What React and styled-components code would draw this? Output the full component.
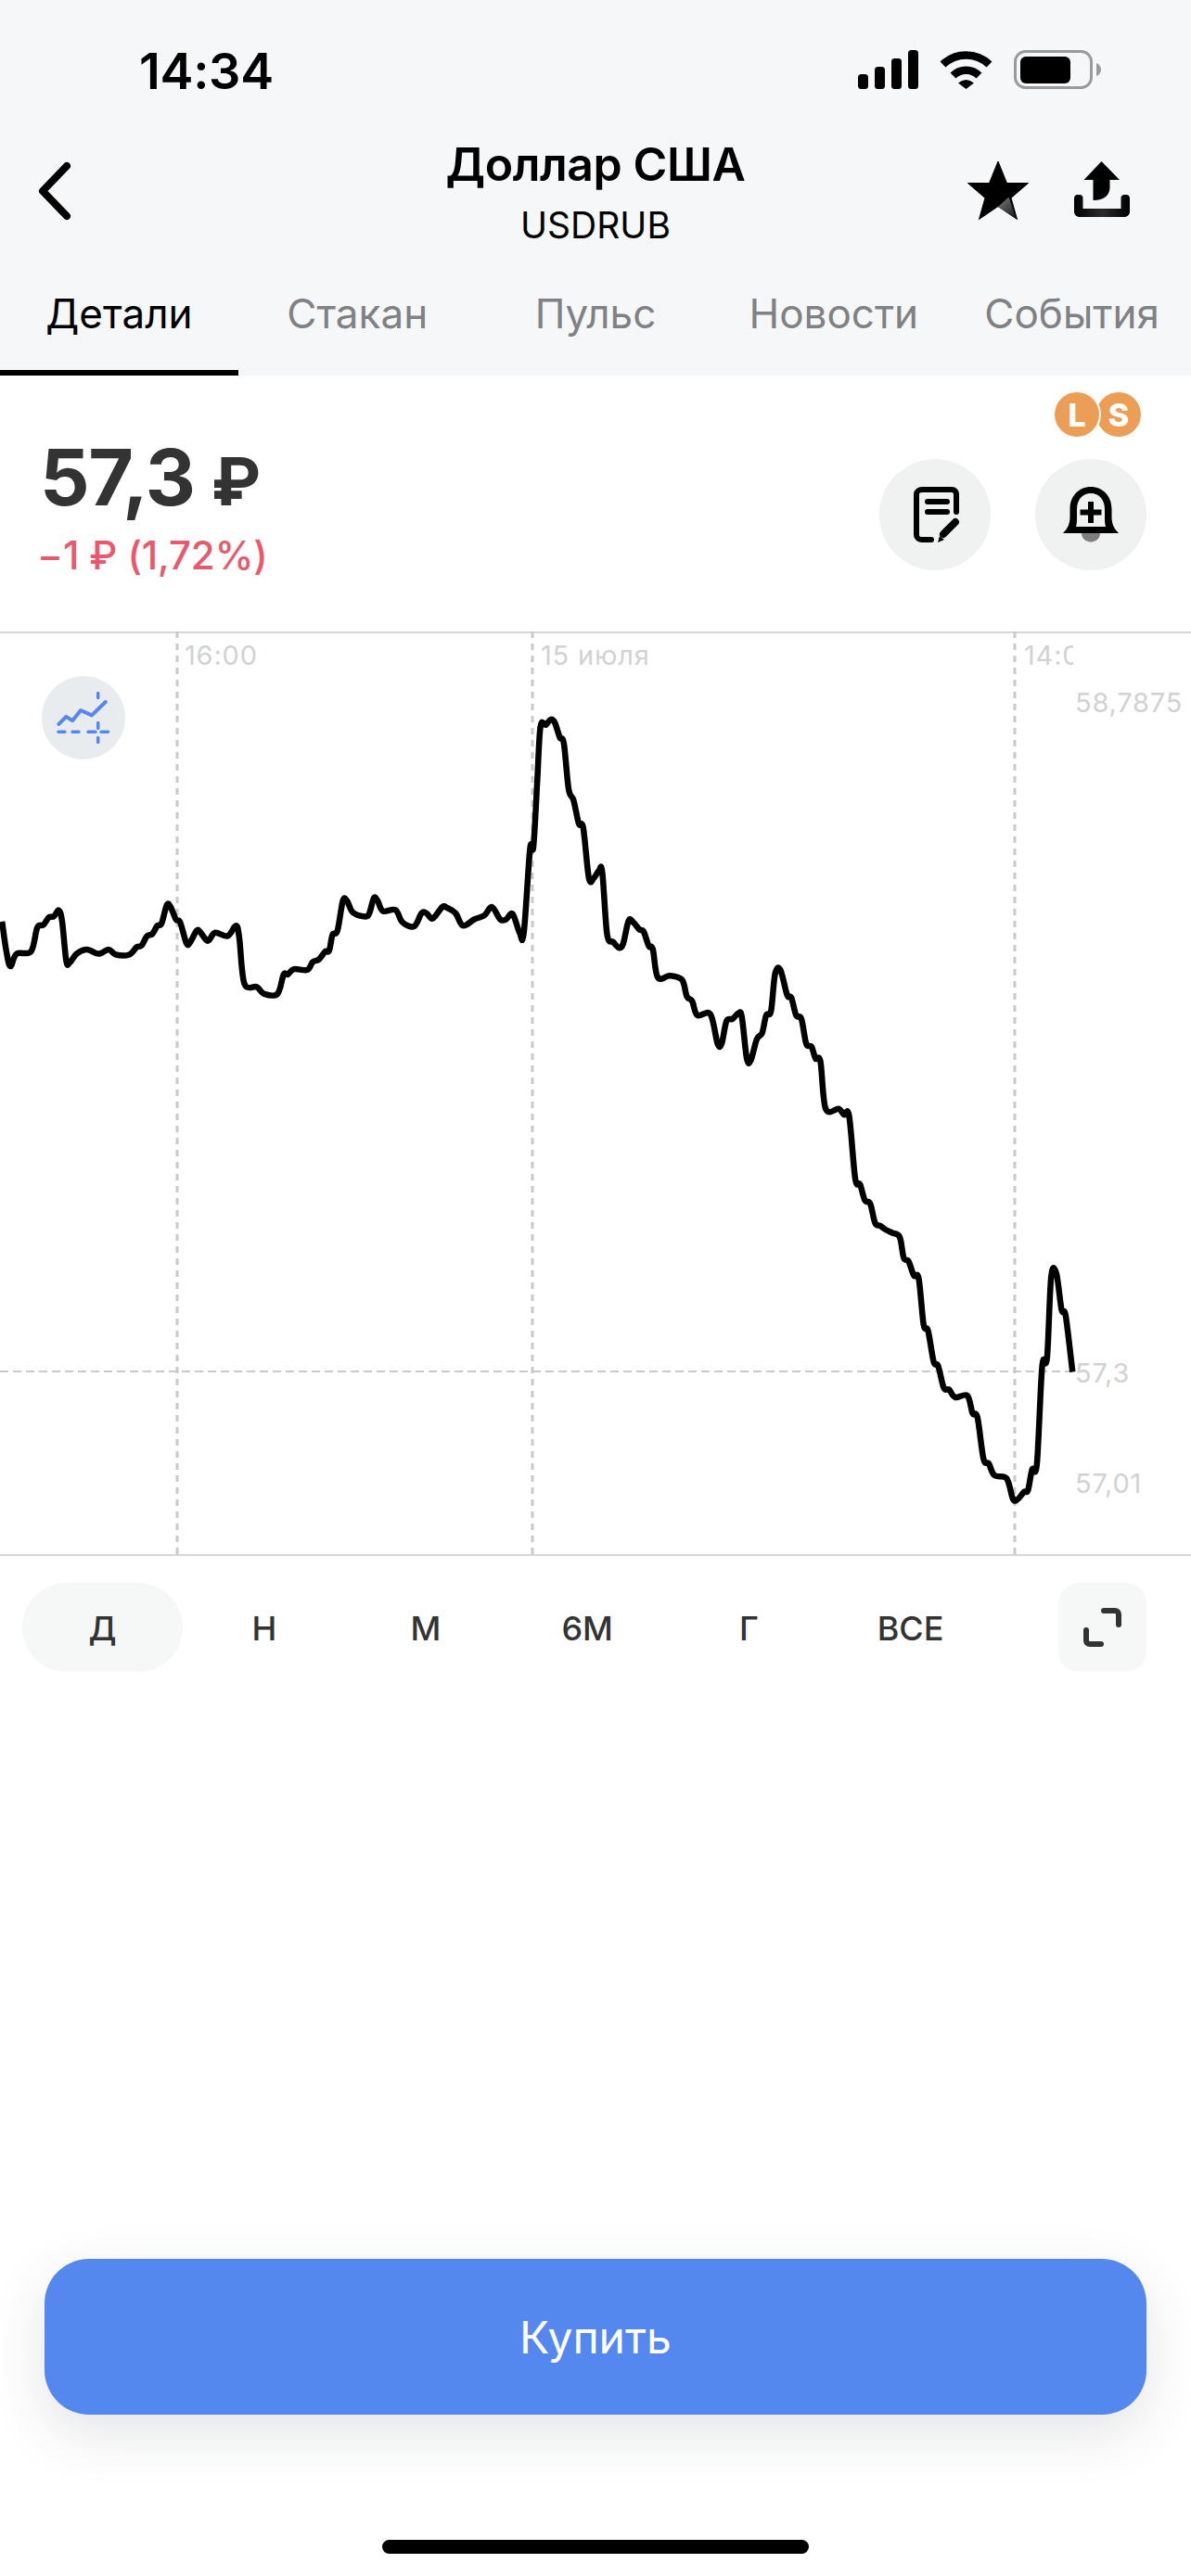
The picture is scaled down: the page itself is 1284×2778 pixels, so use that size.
import React from "react";
import styled, { createGlobalStyle } from "styled-components";

const Global = createGlobalStyle`
  html, body { margin: 0; padding: 0; background: #fff; }
  * { box-sizing: border-box; }
  body { font-family: Inter, "Liberation Sans", sans-serif; }
`;

const Page = styled.div`
  width: 1284px;
  height: 2778px;
  display: flex;
  flex-direction: column;
  overflow: hidden;
  background: #fff;
`;
const Header = styled.header`
  background: #f6f7f9;
  height: 405px;
  display: flex;
  flex-direction: column;
`;
const StatusBar = styled.div`
  height: 150px;
  padding: 54px 97px 0 150px;
  display: flex;
  justify-content: space-between;
  align-items: flex-start;
`;
const Time = styled.span`
  font-size: 54px;
  line-height: 46px;
  font-weight: 600;
  color: #000;
  letter-spacing: -0.3px;
`;
const StatusIcons = styled.div`
  display: flex;
  gap: 23px;
  align-items: flex-start;
`;
const Nav = styled.div`
  height: 150px;
  display: grid;
  grid-template-columns: 300px 1fr 300px;
`;
const BackCell = styled.div`
  padding: 24px 0 0 40px;
`;
const TitleCell = styled.div`
  display: flex;
  flex-direction: column;
  align-items: center;
  margin-top: -2px;
`;
const Title = styled.div`
  font-size: 50px;
  line-height: 58px;
  font-weight: 600;
  color: #000;
  letter-spacing: -0.4px;
`;
const Subtitle = styled.div`
  margin-top: 15px;
  font-size: 39px;
  line-height: 44px;
  font-weight: 400;
  color: #000;
`;
const NavActions = styled.div`
  display: flex;
  gap: 49px;
  justify-content: flex-end;
  align-items: flex-start;
  padding: 24px 66px 0 0;
`;
const Tabs = styled.nav`
  flex: 1;
  display: grid;
  grid-template-columns: repeat(5, 1fr);
`;
const Tab = styled.div`
  display: flex;
  justify-content: center;
  padding-top: 12px;
  font-size: 44px;
  line-height: 52px;
  color: ${(p) => (p.$active ? "#000" : "#808184")};
  border-bottom: 6px solid ${(p) => (p.$active ? "#000" : "transparent")};
`;
const Info = styled.section`
  height: 276px;
  display: flex;
  justify-content: space-between;
  padding: 60px 48px 0 40px;
`;
const PriceBlock = styled.div`
  display: flex;
  flex-direction: column;
`;
const Price = styled.div`
  font-size: 84px;
  line-height: 100px;
  font-weight: 700;
  color: #333;
  letter-spacing: -1.5px;
  padding-left: 3px;
`;
const PriceCurrency = styled.span`
  font-size: 72px;
`;
const Change = styled.div`
  margin-top: 5px;
  font-size: 42px;
  line-height: 50px;
  font-weight: 500;
  letter-spacing: -0.1px;
  color: #e8596c;
`;
const Actions = styled.div`
  display: flex;
  gap: 48px;
  padding-top: 30px;
`;
const RoundAction = styled.div`
  position: relative;
  width: 120px;
  height: 120px;
  border-radius: 50%;
  background: #f0f2f2;
  display: flex;
  align-items: center;
  justify-content: center;
`;
const Badges = styled.div`
  position: absolute;
  top: -72px;
  left: 21px;
  display: flex;
`;
const Badge = styled.span`
  width: 48px;
  height: 48px;
  border-radius: 50%;
  background: #ec9e56;
  color: #fff;
  display: flex;
  align-items: center;
  justify-content: center;
  font-size: 34px;
  font-weight: 800;
  margin-left: ${(p) => (p.$second ? "-3px" : "0")};
  box-shadow: ${(p) => (p.$second ? "none" : "0 0 0 2px #fff")};
  z-index: ${(p) => (p.$second ? 0 : 1)};
`;
const Chart = styled.section`
  position: relative;
  height: 997px;
  border-top: 2px solid #d6d6d6;
  border-bottom: 2px solid #d6d6d6;
`;
const ChartSvg = styled.svg`
  position: absolute;
  left: 0;
  top: -2px;
  display: block;
`;
const AxisLabel = styled.span`
  position: absolute;
  left: ${(p) => p.$x}px;
  top: ${(p) => p.$y}px;
  font-size: 29px;
  line-height: 36px;
  letter-spacing: 0.8px;
  color: #d0d2d3;
  white-space: nowrap;
`;
const ClippedLabel = styled(AxisLabel)`
  width: 53px;
  overflow: hidden;
`;
const ChartToggle = styled.div`
  position: absolute;
  left: 45px;
  top: 46px;
  width: 90px;
  height: 90px;
  border-radius: 50%;
  background: #e9ecee;
`;
const Periods = styled.div`
  padding: 29px 48px 0 23px;
  display: flex;
  justify-content: space-between;
  align-items: center;
`;
const PeriodGrid = styled.div`
  display: grid;
  grid-template-columns: repeat(6, 174.2px);
`;
const Period = styled.div`
  height: 96px;
  margin-left: 1px;
  padding-top: 2px;
  border-radius: 48px;
  display: flex;
  align-items: center;
  justify-content: center;
  font-size: 36px;
  font-weight: 500;
  color: #333;
  background: ${(p) => (p.$active ? "#f6f8f8" : "transparent")};
`;
const Expand = styled.div`
  width: 95px;
  height: 96px;
  border-radius: 22px;
  background: #f6f8f8;
  display: flex;
  align-items: center;
  justify-content: center;
`;
const Spacer = styled.div`
  flex: 1;
`;
const BuyButton = styled.button`
  margin: 0 48px;
  height: 168px;
  border: 0;
  border-radius: 48px;
  background: #5588ef;
  color: #fff;
  font-family: inherit;
  font-size: 48px;
  font-weight: 400;
  box-shadow: 0 20px 60px rgba(40, 50, 60, 0.13);
`;
const HomeIndicator = styled.div`
  align-self: center;
  width: 460px;
  height: 15px;
  margin: 135px 0 24px;
  border-radius: 8px;
  background: #000;
`;

const Block = styled.svg`
  display: block;
`;

const z2 = [[5,1330],[15,1400],[25,1438],[40,1408],[75,1402],[90,1345],[105,1338],[118,1320],[130,1318],[142,1303],[150,1330],[160,1425],[168,1430],[185,1408],[210,1398],[238,1408],[262,1398],[280,1410],[312,1410],[330,1392],[342,1388],[355,1365],[368,1360],[380,1340],[390,1335],[403,1290],[412,1295],[425,1325],[435,1332],[450,1382],[458,1382],[475,1352],[483,1355],[498,1375],[505,1375],[520,1357],[550,1365],[570,1340],[578,1370],[590,1480],[620,1488],[638,1505],[670,1505],[685,1458],[695,1458],[710,1445],[742,1447],[755,1428],[770,1422],[785,1403],[795,1400],[803,1362],[815,1352],[828,1280],[838,1280],[852,1308],[882,1318],[892,1310],[903,1273],[912,1280],[925,1305],[955,1302],[972,1332],[1000,1342],[1018,1310],[1030,1310],[1045,1323],[1068,1295],[1080,1297],[1100,1310],[1118,1340],[1145,1325],[1170,1315],[1188,1295],[1208,1325],[1222,1325],[1238,1312],[1255,1358],[1265,1358],[1280,1155],[1288,1150],[1297,1000],[1305,860],[1318,855],[1330,842],[1340,850]];
const z3 = [[8,212],[18,222],[30,300],[42,318],[55,358],[66,365],[80,450],[92,450],[105,437],[113,440],[125,545],[140,558],[155,568],[165,560],[178,522],[190,525],[205,537],[215,540],[228,565],[238,570],[250,618],[280,615],[310,622],[322,650],[335,658],[348,682],[380,680],[398,730],[408,730],[420,692],[435,688],[450,678],[458,685],[470,755],[480,758],[495,722],[508,712],[518,682],[530,675],[540,612],[553,605],[570,648],[580,652],[592,682],[605,688],[617,730],[630,735],[640,755],[652,760],[665,840],[697,840],[710,850],[723,852],[738,958],[750,968],[762,995],[775,1000],[787,1033],[800,1038],[815,1045],[830,1050],[848,1057],[858,1092],[870,1098],[883,1122],[895,1127],[907,1205],[918,1215],[932,1268],[943,1275],[957,1312],[970,1315],[985,1328],[1015,1325],[1028,1355],[1040,1362],[1055,1432],[1068,1440],[1082,1460],[1112,1465],[1128,1500],[1140,1500],[1155,1488],[1165,1485],[1175,1450],[1187,1440],[1200,1275],[1212,1262],[1222,1125],[1235,1118],[1248,1180],[1258,1190],[1275,1285]];

const CHART_TOP = 681;
const points = [
  ...z2.map(([x, y]) => [x / 2.24, 400 + y / 2.24 - CHART_TOP]),
  ...z3.map(([x, y]) => [600 + x / 2.292, 660 + y / 1.568 - CHART_TOP]),
];

function smoothPath(pts) {
  let d = `M${pts[0][0].toFixed(1)} ${pts[0][1].toFixed(1)}`;
  for (let i = 0; i < pts.length - 1; i++) {
    const p0 = pts[Math.max(i - 1, 0)];
    const p1 = pts[i];
    const p2 = pts[i + 1];
    const p3 = pts[Math.min(i + 2, pts.length - 1)];
    const k = 1 / 6;
    const c1x = p1[0] + (p2[0] - p0[0]) * k;
    const c1y = p1[1] + (p2[1] - p0[1]) * k;
    const c2x = p2[0] - (p3[0] - p1[0]) * k;
    const c2y = p2[1] - (p3[1] - p1[1]) * k;
    d += `C${c1x.toFixed(1)} ${c1y.toFixed(1)} ${c2x.toFixed(1)} ${c2y.toFixed(1)} ${p2[0].toFixed(1)} ${p2[1].toFixed(1)}`;
  }
  return d;
}

const SignalIcon = () => (
  <Block width="65" height="42" viewBox="0 0 65 42" fill="#000">
    <rect x="0" y="26" width="11" height="16" rx="3.5" />
    <rect x="18" y="18" width="11" height="24" rx="3.5" />
    <rect x="36" y="9" width="11" height="33" rx="3.5" />
    <rect x="54" y="0" width="11" height="42" rx="3.5" />
  </Block>
);
const WifiIcon = () => (
  <Block width="57" height="42" viewBox="0 0 57 42" fill="none" stroke="#000" strokeWidth="8.5">
    <path d="M3.5 15.5A36 36 0 0 1 53.5 15.5" />
    <path d="M14.5 27.5A20 20 0 0 1 42.5 27.5" />
    <path d="M20 35.5Q28.5 28.5 37 35.5L28.5 42Z" fill="#000" stroke="none" />
  </Block>
);
const BatteryIcon = () => (
  <Block width="94" height="42" viewBox="0 0 94 42">
    <rect x="1.5" y="1.5" width="82" height="39" rx="11" fill="none" stroke="#9a9a9a" strokeWidth="3" />
    <rect x="7" y="7" width="54" height="29" rx="6" fill="#000" />
    <path d="M89 14c3 1 5 4 5 7s-2 6-5 7Z" fill="#9a9a9a" />
  </Block>
);
const BackIcon = () => (
  <Block width="38" height="64" viewBox="0 0 38 64" fill="none" stroke="#000" strokeWidth="8" strokeLinecap="round" strokeLinejoin="round">
    <path d="M32 5L6 32L32 59" />
  </Block>
);
const StarIcon = () => (
  <Block width="66" height="63" viewBox="0 0 66 63">
    <defs>
      <linearGradient id="starWedge" x1="0.2" y1="0.1" x2="0.8" y2="0.9">
        <stop offset="0" stopColor="#6f6f6f" />
        <stop offset="1" stopColor="#222" />
      </linearGradient>
    </defs>
    <path d="M33 0L42.5 23.5H65.5L47 39.5L53.5 62.5L33 48.5L12.5 62.5L19 39.5L0.5 23.5H23.5Z" fill="#000" stroke="#000" strokeWidth="1" strokeLinejoin="round" />
    <path d="M33 49L44.5 38.5L52.5 62Z" fill="url(#starWedge)" />
  </Block>
);
const ShareIcon = () => (
  <Block width="60" height="60" viewBox="0 0 60 60">
    <defs>
      <linearGradient id="tray" x1="0" y1="0" x2="1" y2="0">
        <stop offset="0" stopColor="#000" />
        <stop offset="0.5" stopColor="#2b2b2b" />
        <stop offset="1" stopColor="#000" />
      </linearGradient>
    </defs>
    <path d="M29.5 0L49 20H38.5V28C38.5 36 33 42 20.5 42V20H10.5Z" fill="#000" />
    <path d="M4 36H6C8 36 9.5 37.5 9.5 39.5V51H50.5V39.5C50.5 37.5 52 36 54 36H56C58.500 36 60 37.5 60 40V54C60 57.500 57.500 60 54 60H6C2.500 60 0 57.500 0 54V40C0 37.500 1.500 36 4 36Z" fill="url(#tray)" />
  </Block>
);
const NoteIcon = () => (
  <Block width="50" height="60" viewBox="0 0 50 60" fill="none" stroke="#000" strokeWidth="6" strokeLinecap="round" style={{ marginLeft: 4 }}>
    <path d="M46 27V8C46 5 44 3 41 3H9C6 3 3 5 3 8V52C3 55 6 57 9 57H19" />
    <path d="M15 16H36M15 27H36" />
    <path d="M45 38L32 51" strokeWidth="8" />
    <path d="M26 60L28 53L33 57Z" fill="#000" stroke="none" />
  </Block>
);
const BellIcon = () => (
  <Block width="60" height="60" viewBox="0 0 60 60">
    <path d="M20 50H40C40 56 35 59.500 30 59.500C25 59.500 20 56 20 50Z" fill="#7e7e7e" />
    <path
      fillRule="evenodd"
      fill="#000"
      d="M0 50C5 45 7.500 40 7.500 32V24C7.500 10 17 0 30 0C43 0 52.500 10 52.500 24V32C52.500 40 55 45 60 50ZM14 43H46C45 40 45 36 45 32V24C45 14 39 7 30 7C21 7 15 14 15 24V32C15 36 15 40 14 43Z"
    />
    <path d="M27 16H33V24.500H41.500V30.500H33V39H27V30.500H18.500V24.500H27Z" fill="#000" />
  </Block>
);
const ExpandIcon = () => (
  <Block width="41" height="42" viewBox="0 0 41 42" fill="none" stroke="#333" strokeWidth="6" strokeLinecap="round" strokeLinejoin="round">
    <path d="M22 3H34C36.500 3 38 4.500 38 7V18" />
    <path d="M3 24V35C3 37.500 4.500 39 7 39H19" />
  </Block>
);
const TrendIcon = () => (
  <Block width="90" height="90" viewBox="0 0 90 90" fill="none" stroke="#5588ef" strokeLinecap="round" strokeLinejoin="round">
    <path d="M18.400 51.800L26.300 43.800L33 48.200L42 37L54 42.400L68.700 28" strokeWidth="4" />
    <path d="M18 60.300H25M33 60.300H40M50 60.300H58M64 60.300H71.500" strokeWidth="3.500" />
    <path d="M60.700 18.500V23.500M60.700 50.500V56.500M60.700 66.500V71.500" strokeWidth="3.500" />
  </Block>
);

const tabs = ["Детали", "Стакан", "Пульс", "Новости", "События"];
const periods = ["Д", "Н", "М", "6М", "Г", "ВСЕ"];

export default function App() {
  const d = smoothPath(points);
  return (
    <Page>
      <Global />
      <Header>
        <StatusBar>
          <Time>14:34</Time>
          <StatusIcons>
            <SignalIcon />
            <WifiIcon />
            <BatteryIcon />
          </StatusIcons>
        </StatusBar>
        <Nav>
          <BackCell>
            <BackIcon />
          </BackCell>
          <TitleCell>
            <Title>Доллар США</Title>
            <Subtitle>USDRUB</Subtitle>
          </TitleCell>
          <NavActions>
            <StarIcon />
            <ShareIcon />
          </NavActions>
        </Nav>
        <Tabs>
          {tabs.map((t, i) => (
            <Tab key={t} $active={i === 0}>
              {t}
            </Tab>
          ))}
        </Tabs>
      </Header>
      <Info>
        <PriceBlock>
          <Price>
            57,3 <PriceCurrency>₽</PriceCurrency>
          </Price>
          <Change>−1 ₽ (1,72%)</Change>
        </PriceBlock>
        <Actions>
          <RoundAction>
            <NoteIcon />
          </RoundAction>
          <RoundAction>
            <Badges>
              <Badge>L</Badge>
              <Badge $second>S</Badge>
            </Badges>
            <BellIcon />
          </RoundAction>
        </Actions>
      </Info>
      <Chart>
        <ChartSvg width="1284" height="997" viewBox="0 0 1284 997" fill="none">
          <g stroke="#c9c9c9" strokeWidth="3" strokeDasharray="7 6">
            <path d="M191 0V995M574 0V995M1094 0V995" />
          </g>
          <path d="M0 798H1158" stroke="#c9c9c9" strokeWidth="2" strokeDasharray="9 5" />
          <path d={d} stroke="#000" strokeWidth="6.5" strokeLinejoin="round" strokeLinecap="butt" />
        </ChartSvg>
        <AxisLabel $x={199} $y={6}>16:00</AxisLabel>
        <AxisLabel $x={583} $y={6}>15 июля</AxisLabel>
        <ClippedLabel $x={1104} $y={6}>14:00</ClippedLabel>
        <AxisLabel $x={1159} $y={57}>58,7875</AxisLabel>
        <AxisLabel $x={1159} $y={780}>57,3</AxisLabel>
        <AxisLabel $x={1159} $y={899}>57,01</AxisLabel>
        <ChartToggle>
          <TrendIcon />
        </ChartToggle>
      </Chart>
      <Periods>
        <PeriodGrid>
          {periods.map((p, i) => (
            <Period key={p} $active={i === 0}>
              {p}
            </Period>
          ))}
        </PeriodGrid>
        <Expand>
          <ExpandIcon />
        </Expand>
      </Periods>
      <Spacer />
      <BuyButton>Купить</BuyButton>
      <HomeIndicator />
    </Page>
  );
}
